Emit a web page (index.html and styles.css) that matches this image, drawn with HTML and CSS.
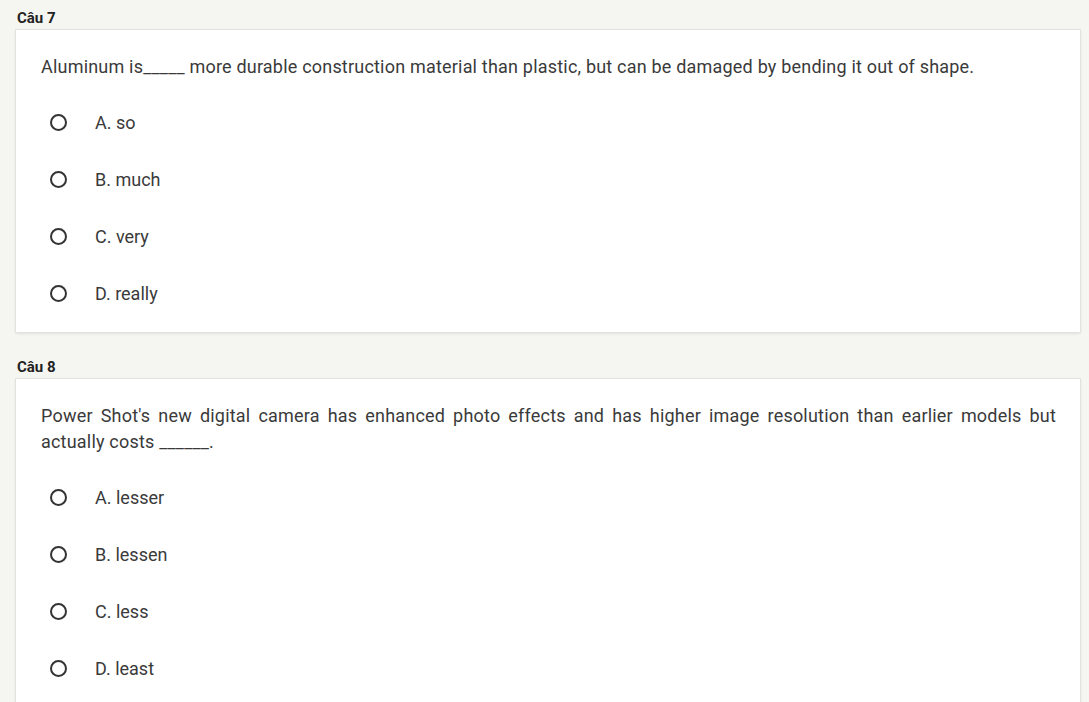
FILE: index.html
```html
<!DOCTYPE html>
<html lang="vi">
<head>
<meta charset="utf-8">
<title>Quiz</title>
<link rel="stylesheet" href="styles.css">
</head>
<body>
<div class="quiz">
  <section class="question">
    <div class="q-label">Câu 7</div>
    <div class="card">
      <p class="q-text">Aluminum is_____ more durable construction material than plastic, but can be damaged by bending it out of shape.</p>
      <ul class="options">
        <li class="option"><span class="radio"></span><span class="opt-text">A. so</span></li>
        <li class="option"><span class="radio"></span><span class="opt-text">B. much</span></li>
        <li class="option"><span class="radio"></span><span class="opt-text">C. very</span></li>
        <li class="option"><span class="radio"></span><span class="opt-text">D. really</span></li>
      </ul>
    </div>
  </section>
  <section class="question">
    <div class="q-label">Câu 8</div>
    <div class="card">
      <p class="q-text">Power Shot's new digital camera has enhanced photo effects and has higher image resolution than earlier models but actually costs ______.</p>
      <ul class="options">
        <li class="option"><span class="radio"></span><span class="opt-text">A. lesser</span></li>
        <li class="option"><span class="radio"></span><span class="opt-text">B. lessen</span></li>
        <li class="option"><span class="radio"></span><span class="opt-text">C. less</span></li>
        <li class="option"><span class="radio"></span><span class="opt-text">D. least</span></li>
      </ul>
    </div>
  </section>
</div>
</body>
</html>
```

FILE: styles.css
```css
html, body {
  margin: 0;
  padding: 0;
  background: #f5f5f2;
}
body {
  font-family: Roboto, "Liberation Sans", Arial, sans-serif;
  color: #333;
}
.quiz {
  padding: 8px 9px 20px 16px;
  display: flex;
  flex-direction: column;
  gap: 25px;
}
.q-label {
  font-size: 15px;
  font-weight: 700;
  color: #222;
  line-height: 20px;
  margin: 0 0 2px 1px;
}
.card {
  background: #fff;
  box-shadow: 0 0 0 1px #e2e2de, 0 1px 3px rgba(0,0,0,0.15);
  padding: 24px 24px 10px 25px;
}
.q-text {
  margin: 0 0 14px;
  font-size: 18px;
  letter-spacing: 0.2px;
  line-height: 26px;
  text-align: justify;
  color: #3a3a3a;
}
.options {
  list-style: none;
  margin: 0;
  padding: 0;
}
.option {
  height: 57px;
  display: flex;
  align-items: center;
  padding-left: 9px;
}
.radio {
  width: 17px;
  height: 17px;
  box-sizing: border-box;
  border: 2px solid #333;
  border-radius: 50%;
  flex: none;
}
.opt-text {
  margin-left: 28px;
  font-size: 18px;
  color: #3a3a3a;
}
```
